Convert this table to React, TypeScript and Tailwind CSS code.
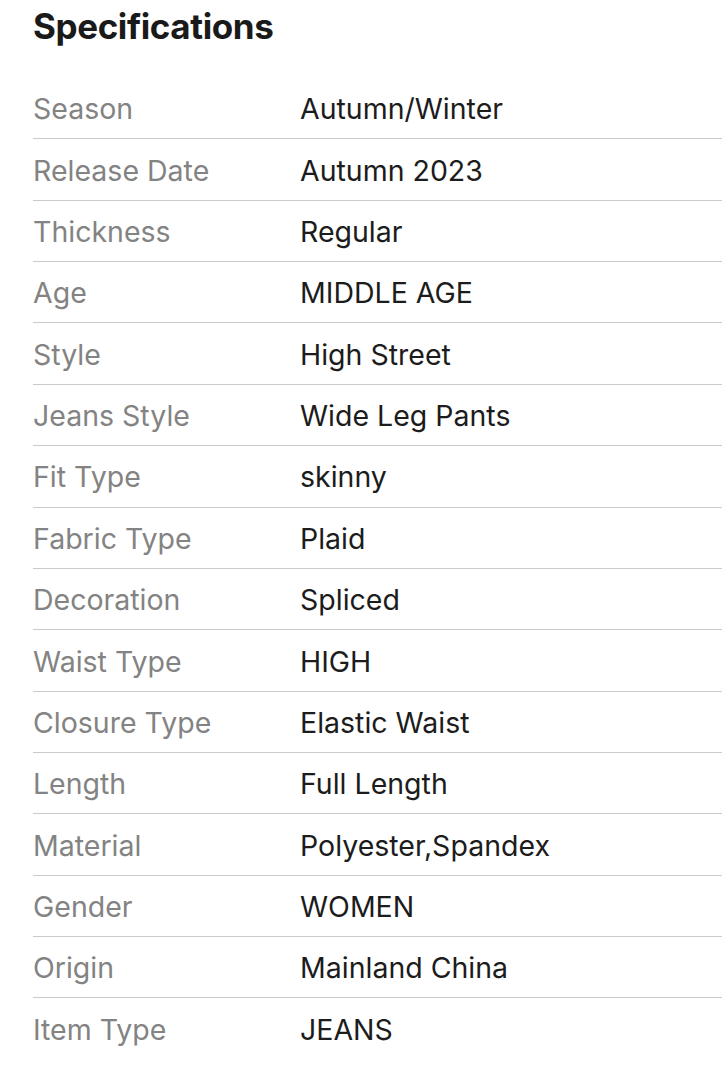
const specs: [string, string][] = [
  ["Season", "Autumn/Winter"],
  ["Release Date", "Autumn 2023"],
  ["Thickness", "Regular"],
  ["Age", "MIDDLE AGE"],
  ["Style", "High Street"],
  ["Jeans Style", "Wide Leg Pants"],
  ["Fit Type", "skinny"],
  ["Fabric Type", "Plaid"],
  ["Decoration", "Spliced"],
  ["Waist Type", "HIGH"],
  ["Closure Type", "Elastic Waist"],
  ["Length", "Full Length"],
  ["Material", "Polyester,Spandex"],
  ["Gender", "WOMEN"],
  ["Origin", "Mainland China"],
  ["Item Type", "JEANS"],
];

export default function App() {
  return (
    <div className="w-[722px] min-h-[1066px] bg-white pl-[33px] font-['Inter','Noto_Sans',sans-serif]">
      <h2 className="pt-[3px] text-[35px] leading-[46px] font-bold tracking-[-0.4px] text-[#1a1a1a]">
        Specifications
      </h2>
      <div className="mt-[29px]">
        {specs.map(([label, value], i) => (
          <div
            key={label}
            className={`flex items-center h-[61.36px] pt-[3px] ${
              i < specs.length - 1 ? "border-b border-[#cbcbcb]" : ""
            }`}
          >
            <span className="w-[267px] text-[28.5px] text-[#838383]">
              {label}
            </span>
            <span className="text-[28.5px] text-[#1c1c1c]">{value}</span>
          </div>
        ))}
      </div>
    </div>
  );
}
